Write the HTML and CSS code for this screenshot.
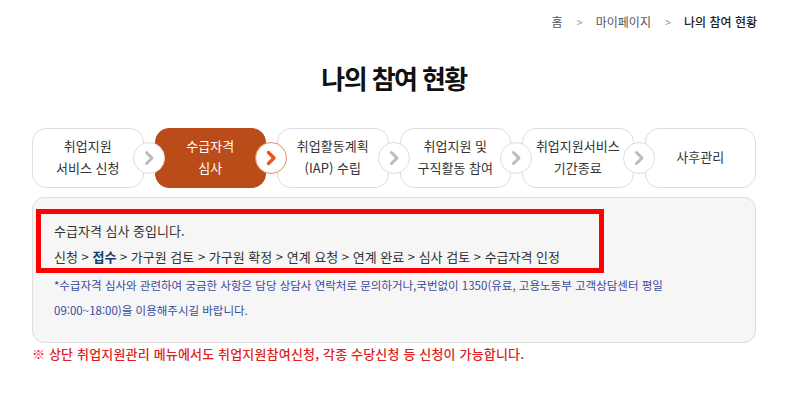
FILE: index.html
```html
<!DOCTYPE html>
<html lang="ko">
<head>
<meta charset="utf-8">
<link rel="stylesheet" href="styles.css">
</head>
<body>
<div class="page">
  <nav class="crumbs">
    <span>홈</span><span class="sep">&gt;</span><span>마이페이지</span><span class="sep">&gt;</span><span class="cur">나의 참여 현황</span>
  </nav>
  <h1 class="title">나의 참여 현황</h1>
  <ol class="steps">
    <li class="step">취업지원<br>서비스 신청<span class="arrow"><svg viewBox="0 0 32 32" width="32" height="32"><path d="M13.5 10.5 L19 16 L13.5 21.5" /></svg></span></li>
    <li class="step active">수급자격<br>심사<span class="arrow"><svg viewBox="0 0 32 32" width="32" height="32"><path d="M13.5 10.5 L19 16 L13.5 21.5" /></svg></span></li>
    <li class="step">취업활동계획<br>(IAP) 수립<span class="arrow"><svg viewBox="0 0 32 32" width="32" height="32"><path d="M13.5 10.5 L19 16 L13.5 21.5" /></svg></span></li>
    <li class="step">취업지원 및<br>구직활동 참여<span class="arrow"><svg viewBox="0 0 32 32" width="32" height="32"><path d="M13.5 10.5 L19 16 L13.5 21.5" /></svg></span></li>
    <li class="step">취업지원서비스<br>기간종료<span class="arrow"><svg viewBox="0 0 32 32" width="32" height="32"><path d="M13.5 10.5 L19 16 L13.5 21.5" /></svg></span></li>
    <li class="step">사후관리</li>
  </ol>
  <div class="info">
    <div class="mark">
      <p class="status">수급자격 심사 중입니다.</p>
      <p class="flow">신청 &gt; <b>접수</b> &gt; 가구원 검토 &gt; 가구원 확정 &gt; 연계 요청 &gt; 연계 완료 &gt; 심사 검토 &gt; 수급자격 인정</p>
    </div>
    <p class="note">*수급자격 심사와 관련하여 궁금한 사항은 담당 상담사 연락처로 문의하거나,국번없이 1350(유료, 고용노동부 고객상담센터 평일<br>09:00~18:00)을 이용해주시길 바랍니다.</p>
  </div>
  <p class="warn">※ 상단 취업지원관리 메뉴에서도 취업지원참여신청, 각종 수당신청 등 신청이 가능합니다.</p>
</div>
</body>
</html>
```
FILE: styles.css
```css
* { box-sizing: border-box; }
html, body { margin: 0; padding: 0; background: #fff; }
body {
  font-family: "Noto Sans CJK KR", "Noto Sans", sans-serif;
  color: #333;
}
.page {
  width: 724px;
  margin-left: 32px;
}
.crumbs {
  display: flex;
  justify-content: flex-end;
  align-items: center;
  padding-top: 13px;
  height: 31px;
  font-size: 12px;
  line-height: 16px;
  color: #555;
  margin-right: -1px;
}
.crumbs .sep {
  color: #999;
  margin: 0 13px 0 14px;
  font-size: 11px;
}
.crumbs .cur {
  color: #222;
  font-weight: 500;
}
.title {
  margin: 0;
  padding-top: 29px;
  height: 97px;
  text-align: center;
  font-size: 26px;
  line-height: 36px;
  font-weight: 700;
  color: #111;
  letter-spacing: -1.6px;
}
.steps {
  list-style: none;
  margin: 0;
  padding: 0;
  display: flex;
  gap: 11px;
  height: 60px;
}
.step {
  position: relative;
  flex: 1;
  display: flex;
  align-items: center;
  justify-content: center;
  text-align: center;
  border: 1px solid #ddd;
  border-radius: 14px;
  background: #fff;
  font-size: 13px;
  line-height: 22px;
  color: #333;
  padding-bottom: 2px;
}
.step.active {
  background: #b94c19;
  border-color: #b94c19;
  color: #fff;
}
.arrow {
  position: absolute;
  right: -22px;
  top: 50%;
  margin-top: -16px;
  width: 32px;
  height: 32px;
  border-radius: 50%;
  background: #fff;
  border: 1px solid #ddd;
  z-index: 2;
}
.arrow svg {
  position: absolute;
  left: -1px;
  top: -1px;
  fill: none;
  stroke: #bbb;
  stroke-width: 3;
  stroke-linecap: round;
  stroke-linejoin: round;
}
.active .arrow {
  border-color: #ee8a5a;
}
.active .arrow svg {
  stroke: #e8581c;
  stroke-width: 3.4;
}
.info {
  margin-top: 9px;
  height: 146px;
  background: #f6f6f6;
  border: 1px solid #ddd;
  border-radius: 12px;
  padding: 11px 0 0 3px;
}
.mark {
  width: 568px;
  height: 64px;
  border: 5px solid #ff0000;
  padding: 4px 0 0 13px;
}
.status, .flow {
  margin: 0;
  font-size: 13px;
  line-height: 26px;
  color: #333;
}
.flow b {
  color: #163a6e;
  font-weight: 700;
}
.note {
  margin: 0;
  padding: 0 0 0 18px;
  font-size: 11.5px;
  line-height: 25px;
  color: #3b4a9c;
}
.warn {
  margin: 0;
  padding-top: 1px;
  font-size: 13px;
  line-height: 20px;
  color: #e01e1e;
  font-weight: 500;
  letter-spacing: 0.17px;
}
```
